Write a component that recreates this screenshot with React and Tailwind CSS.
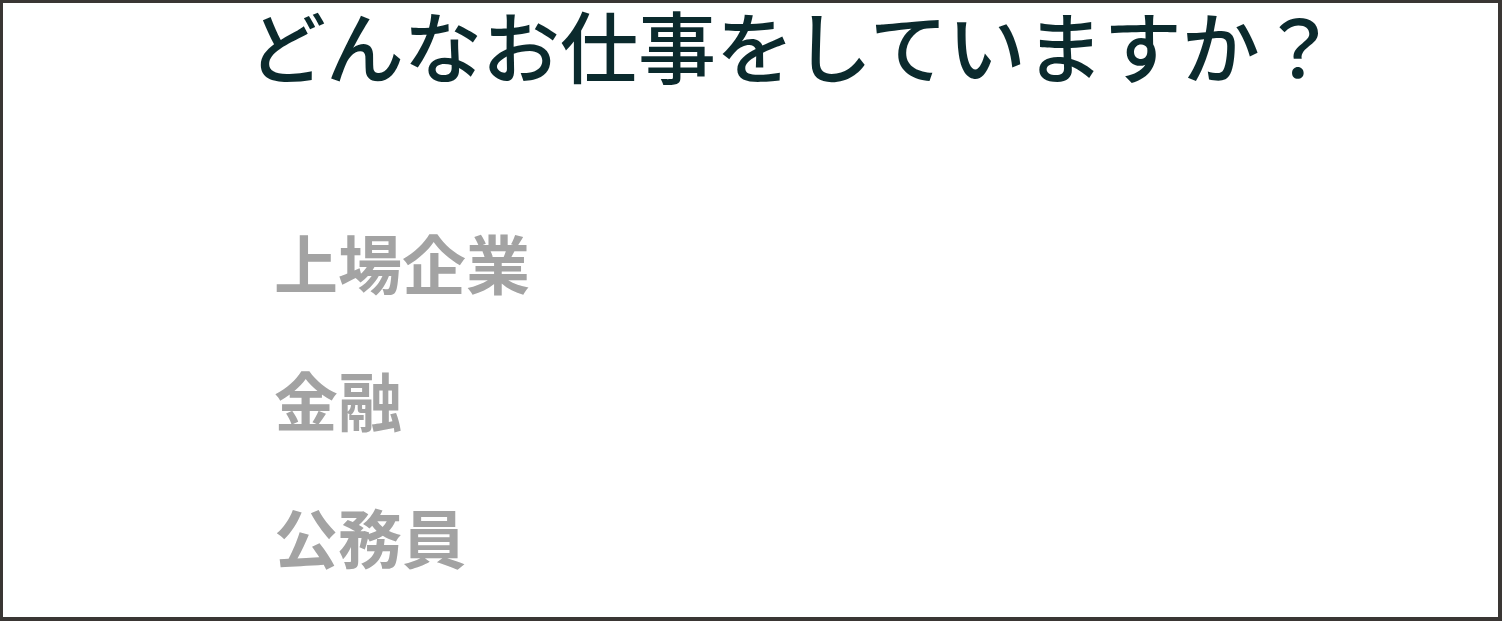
export default function App() {
  const jobs = ["上場企業", "金融", "公務員"];

  return (
    <div
      className="h-[621px] w-full overflow-hidden border-[3px] border-r-4 border-b-4 border-[#3a3634] bg-white"
      style={{ fontFamily: '"Noto Sans CJK JP", "Noto Sans", sans-serif' }}
    >
      <h1 className="pl-[245px] pt-[2px] text-[78px] leading-none font-medium text-[#0b2a2d] whitespace-nowrap">
        どんなお仕事をしていますか？
      </h1>
      <ul className="mt-[146px] flex flex-col gap-[73px] pl-[271px]">
        {jobs.map((job) => (
          <li key={job} className="text-[64px] leading-none font-bold text-[#a3a3a3]">
            {job}
          </li>
        ))}
      </ul>
    </div>
  );
}
